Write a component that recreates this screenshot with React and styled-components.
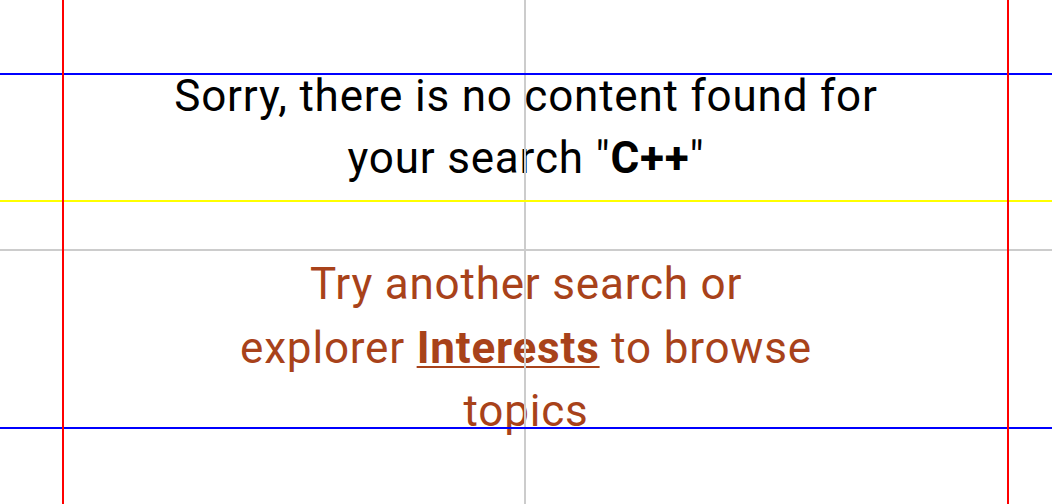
import React from "react";
import styled, { createGlobalStyle } from "styled-components";

const colors = {
  text: "#000000",
  accent: "#a8421a",
  red: "#ff0000",
  blue: "#0000ff",
  yellow: "#ffff00",
  grey: "#cccccc",
};

const GlobalStyle = createGlobalStyle`
  html, body {
    margin: 0;
    padding: 0;
    background: #ffffff;
  }
`;

const Screen = styled.div`
  position: relative;
  width: 1052px;
  height: 504px;
  overflow: hidden;
  background: #ffffff;
  font-family: Roboto, "Liberation Sans", sans-serif;
`;

const Content = styled.main`
  display: flex;
  flex-direction: column;
  align-items: center;
  padding-top: 65px;
  gap: 64px;
`;

const Message = styled.p`
  margin: 0;
  max-width: ${(p) => p.$width}px;
  text-align: center;
  font-size: 44px;
  line-height: ${(p) => p.$lineHeight}px;
  letter-spacing: 0.8px;
  color: ${(p) => p.$color};

  strong {
    font-weight: 700;
  }
`;

const Link = styled.a`
  color: inherit;
  font-weight: 700;
  text-decoration: underline;
  text-decoration-thickness: 2px;
  text-underline-offset: 3px;
`;

// layout guides drawn over the screen
const Guide = styled.div`
  position: absolute;
  pointer-events: none;
  background: ${(p) => p.$color};
  ${(p) =>
    p.$vertical
      ? `top: 0; bottom: 0; width: 2px; left: ${p.$at}px;`
      : `left: 0; right: 0; height: 2px; top: ${p.$at}px;`}
`;

const guides = [
  { at: 249, color: colors.grey },
  { at: 524, color: colors.grey, vertical: true },
  { at: 200, color: colors.yellow },
  { at: 73, color: colors.blue },
  { at: 427, color: colors.blue },
  { at: 62, color: colors.red, vertical: true },
  { at: 1007, color: colors.red, vertical: true },
];

const App = () => {
  return (
    <Screen>
      <GlobalStyle />
      <Content>
        <Message $width={770} $lineHeight={62} $color={colors.text}>
          Sorry, there is no content found for your search "<strong>C++</strong>"
        </Message>
        <Message $width={594} $lineHeight={63.5} $color={colors.accent}>
          Try another search or explorer <Link href="#">Interests</Link> to
          browse topics
        </Message>
      </Content>
      {guides.map((g, i) => (
        <Guide key={i} $at={g.at} $color={g.color} $vertical={g.vertical} />
      ))}
    </Screen>
  );
};

export default App;
